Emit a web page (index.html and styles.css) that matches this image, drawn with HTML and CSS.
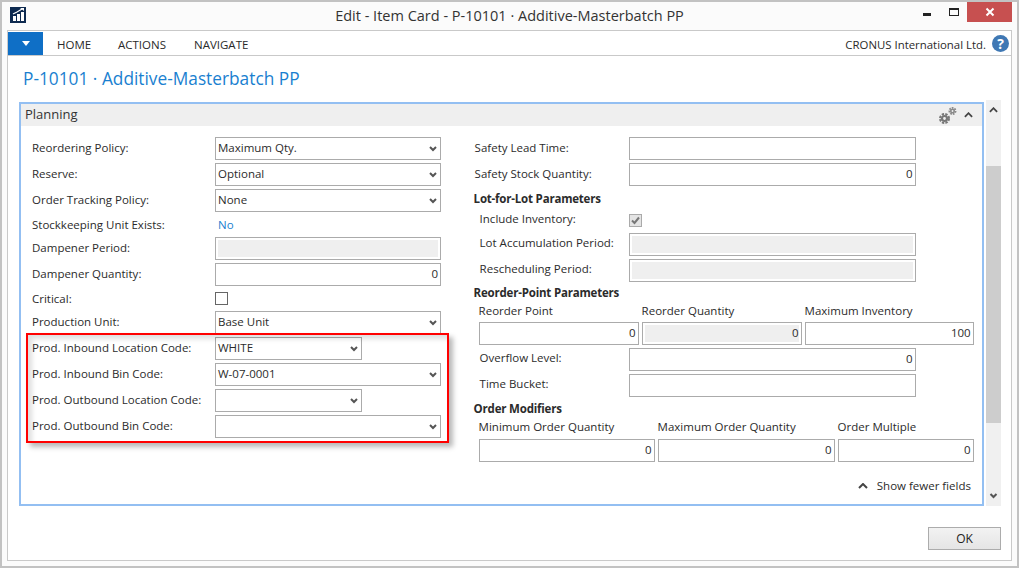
FILE: index.html
```html
<!DOCTYPE html>
<html lang="en">
<head>
<meta charset="utf-8">
<title>Edit - Item Card - P-10101 · Additive-Masterbatch PP</title>
<link rel="stylesheet" href="styles.css">
</head>
<body>
<svg class="defs" aria-hidden="true">
  <symbol id="down" viewBox="0 0 8 6"><path d="M1 1l3 3 3-3" fill="none" stroke="#555" stroke-width="2"/></symbol>
  <symbol id="up" viewBox="0 0 10 6"><path d="M1 5l4-4 4 4" fill="none" stroke="#444" stroke-width="2"/></symbol>
</svg>
<div class="window">
  <header class="titlebar">
    <svg class="logo" viewBox="0 0 16 16"><rect width="16" height="16" fill="#0e2a50"/><path d="M3 9h3v5H3zM7 7h3v7H7zM11 5h3v9h-3z" fill="#fff"/><path d="M3 7l4-2 5-3" fill="none" stroke="#fff" stroke-width="1.2"/><path d="M10 1h4v3z" fill="#fff"/></svg>
    <h1 class="wintitle">Edit - Item Card - P-10101 · Additive-Masterbatch PP</h1>
    <div class="winbtns">
      <span class="btn-min"></span>
      <span class="btn-max"></span>
      <span class="btn-close"><svg width="10" height="10" viewBox="0 0 10 10"><path d="M1.500 1.500l7 7M8.500 1.500l-7 7" stroke="#fff" stroke-width="2"/></svg></span>
    </div>
  </header>
  <div class="frame">
    <nav class="ribbon">
      <span class="appbtn"><i class="tri"></i></span>
      <span class="tab tab-home">HOME</span>
      <span class="tab tab-actions">ACTIONS</span>
      <span class="tab tab-nav">NAVIGATE</span>
      <span class="company">CRONUS International Ltd.</span>
      <span class="help">?</span>
    </nav>
    <main class="page">
      <h2 class="pagetitle">P-10101 · Additive-Masterbatch PP</h2>
      <div class="cardrow">
        <section class="card">
          <div class="cardhead">
            <span class="cardname">Planning</span>
            <svg class="gears" viewBox="0 0 18 17"><circle cx="5.500" cy="11.500" r="2.500" fill="none" stroke="#777" stroke-width="2.200"/><circle cx="5.500" cy="11.500" r="4.400" fill="none" stroke="#777" stroke-width="2.200" stroke-dasharray="2.300 1.200"/><circle cx="13.500" cy="4" r="1.700" fill="none" stroke="#8a8a8a" stroke-width="1.600"/><circle cx="13.500" cy="4" r="3.100" fill="none" stroke="#8a8a8a" stroke-width="1.800" stroke-dasharray="1.700 1"/></svg>
            <svg class="collapse"><use href="#up"/></svg>
          </div>
          <div class="cardbody">
            <div class="col col-left">
              <div class="row"><label class="lbl">Reordering Policy:</label><div class="fld sel">Maximum Qty.<svg class="chev"><use href="#down"/></svg></div></div>
              <div class="row"><label class="lbl">Reserve:</label><div class="fld sel">Optional<svg class="chev"><use href="#down"/></svg></div></div>
              <div class="row"><label class="lbl">Order Tracking Policy:</label><div class="fld sel">None<svg class="chev"><use href="#down"/></svg></div></div>
              <div class="row row-text"><label class="lbl">Stockkeeping Unit Exists:</label><a class="link">No</a></div>
              <div class="row"><label class="lbl">Dampener Period:</label><div class="fld off"></div></div>
              <div class="row"><label class="lbl">Dampener Quantity:</label><div class="fld num">0</div></div>
              <div class="row row-text"><label class="lbl">Critical:</label><span class="check"></span></div>
              <div class="row"><label class="lbl">Production Unit:</label><div class="fld sel">Base Unit<svg class="chev"><use href="#down"/></svg></div></div>
              <div class="row"><label class="lbl">Prod. Inbound Location Code:</label><div class="fld sel short">WHITE<svg class="chev"><use href="#down"/></svg></div></div>
              <div class="row"><label class="lbl">Prod. Inbound Bin Code:</label><div class="fld sel">W-07-0001<svg class="chev"><use href="#down"/></svg></div></div>
              <div class="row"><label class="lbl">Prod. Outbound Location Code:</label><div class="fld sel short"><svg class="chev"><use href="#down"/></svg></div></div>
              <div class="row"><label class="lbl">Prod. Outbound Bin Code:</label><div class="fld sel"><svg class="chev"><use href="#down"/></svg></div></div>
              <div class="highlight"></div>
            </div>
            <div class="col col-right">
              <div class="row"><label class="lbl">Safety Lead Time:</label><div class="fld"></div></div>
              <div class="row"><label class="lbl">Safety Stock Quantity:</label><div class="fld num">0</div></div>
              <h3 class="group group-first">Lot-for-Lot Parameters</h3>
              <div class="row row-text sub"><label class="lbl">Include Inventory:</label><span class="check checked"><svg width="11" height="11" viewBox="0 0 11 11"><path d="M2 5.500l2.500 2.500L9 2.500" fill="none" stroke="#777" stroke-width="2"/></svg></span></div>
              <div class="row sub"><label class="lbl">Lot Accumulation Period:</label><div class="fld off"></div></div>
              <div class="row sub"><label class="lbl">Rescheduling Period:</label><div class="fld off"></div></div>
              <h3 class="group">Reorder-Point Parameters</h3>
              <div class="triple triple-a">
                <span class="caption">Reorder Point</span><span class="caption">Reorder Quantity</span><span class="caption">Maximum Inventory</span>
                <div class="fld num">0</div><div class="fld num off-num">0</div><div class="fld num">100</div>
              </div>
              <div class="row sub"><label class="lbl">Overflow Level:</label><div class="fld num">0</div></div>
              <div class="row sub"><label class="lbl">Time Bucket:</label><div class="fld"></div></div>
              <h3 class="group group-order">Order Modifiers</h3>
              <div class="triple triple-b">
                <span class="caption">Minimum Order Quantity</span><span class="caption">Maximum Order Quantity</span><span class="caption">Order Multiple</span>
                <div class="fld num">0</div><div class="fld num">0</div><div class="fld num">0</div>
              </div>
            </div>
          </div>
          <div class="more"><svg class="morechev"><use href="#up"/></svg><span>Show fewer fields</span></div>
        </section>
        <aside class="scrollbar">
          <svg class="sb-arrow"><use href="#up"/></svg>
          <div class="sb-track"><div class="sb-thumb"></div></div>
          <svg class="sb-arrow"><use href="#down"/></svg>
        </aside>
      </div>
      <footer class="actions"><button class="ok" type="button">OK</button></footer>
    </main>
  </div>
</div>
</body>
</html>
```
FILE: styles.css
```css
* { box-sizing: border-box; }
html, body { margin: 0; padding: 0; }
body { width: 1019px; height: 568px; overflow: hidden; font-family: "Open Sans", "Noto Sans", sans-serif; font-size: 11.5px; color: #2b2b2b; }
.defs { position: absolute; width: 0; height: 0; }
.window { width: 1019px; height: 568px; border: 2px solid #c2c2c2; background: #fbfbfb; display: flex; flex-direction: column; }

.titlebar { height: 28px; flex: none; display: flex; align-items: flex-start; position: relative; }
.logo { width: 16px; height: 16px; margin: 5px 0 0 8px; flex: none; }
.wintitle { position: absolute; left: 0; right: 0; top: 5px; margin: 0; text-align: center; font-size: 14.5px; line-height: 18px; font-weight: 400; color: #333; }
.winbtns { margin-left: auto; display: flex; align-items: flex-start; position: relative; }
.btn-min { width: 8px; height: 3px; background: #222; margin: 11px 18px 0 0; }
.btn-max { width: 10px; height: 8px; border: 1px solid #222; border-top-width: 2px; margin: 6px 8px 0 0; }
.btn-close { width: 45px; height: 20px; background: #c75050; margin: 0 5px 0 0; display: flex; align-items: center; justify-content: center; }

.frame { flex: 1; margin: 0 5px 5px; border: 1px solid #c9c9c9; background: #fff; display: flex; flex-direction: column; min-height: 0; }
.ribbon { height: 25px; flex: none; border-bottom: 1px solid #c9c9c9; display: flex; align-items: center; background: #fff; padding-top: 1px; }
.appbtn { width: 35px; height: 23px; background: #0f6fc6; display: flex; align-items: center; justify-content: center; flex: none; }
.tri { width: 0; height: 0; border-left: 4.500px solid transparent; border-right: 4.500px solid transparent; border-top: 5px solid #fff; }
.tab { font-size: 11.5px; color: #2a2a2a; padding-top: 2px; }
.tab-home { margin-left: 14px; width: 61px; }
.tab-actions { width: 76px; }
.company { margin-left: auto; font-size: 11.4px; color: #2a2a2a; padding-top: 2px; }
.help { width: 17px; height: 17px; border-radius: 50%; background: #3f78b4; color: #fff; font-weight: 700; font-size: 14px; line-height: 17px; text-align: center; margin: 0 2px 0 6px; }

.page { flex: 1; display: flex; flex-direction: column; padding-left: 11px; min-height: 0; }
.pagetitle { height: 44px; margin: 0; flex: none; font-size: 17.3px; line-height: 46px; font-weight: 400; color: #1a7fd0; padding-left: 4px; }
.cardrow { display: flex; height: 406px; flex: none; }
.card { width: 965px; height: 404px; margin-top: 2px; border: 2px solid #93bff2; display: flex; flex-direction: column; }
.cardhead { height: 22px; flex: none; background: #efefef; display: flex; align-items: center; padding: 0 8px 0 4px; }
.cardname { font-size: 13px; color: #333; padding-bottom: 2px; }
.gears { width: 18px; height: 17px; margin-left: auto; }
.collapse { width: 9px; height: 6px; margin-left: 7px; margin-right: 1px; }

.cardbody { display: flex; padding-top: 11px; position: relative; flex: none; }
.col { display: flex; flex-direction: column; }
.col-left { width: 455px; padding-left: 11px; position: relative; }
.col-right { width: 509px; }
.row { display: flex; align-items: center; height: 23px; margin-bottom: 3px; }
.row-text { height: 19px; }
.lbl { flex: none; width: 183px; white-space: nowrap; padding-bottom: 2px; }
.row-text .lbl { padding-bottom: 0; }
.col-right .lbl { width: 154px; }
.col-right .fld { width: 287px; }
.sub { padding-left: 5px; }
.col-right .sub .lbl { width: 149px; padding-bottom: 4px; }

.fld { width: 226px; height: 23px; border: 1px solid #ababab; background: #fff; padding: 0 2px; line-height: 20px; position: relative; white-space: nowrap; color: #2b2b2b; }
.short { width: 147px; }
.num { text-align: right; }
.off { background: #efefef; background-clip: content-box; padding: 2px; }
.off-num { background: linear-gradient(#efefef, #efefef) content-box; padding: 2px; line-height: 16px; }
.chev { position: absolute; right: 3px; top: 8px; width: 8px; height: 6px; }
.link { color: #1a7fd0; padding-left: 3px; }
.check { width: 13px; height: 13px; border: 1px solid #666; background: #fff; display: block; position: relative; }
.checked { background: #e4e4e4; border-color: #aaa; }
.checked svg { position: absolute; left: 0; top: 0; }

.group { margin: 0; height: 17px; font-size: 11.5px; line-height: 15px; font-weight: 700; color: #2b2b2b; letter-spacing: -0.2px; margin-left: -1px; }
.group-first { height: 22px; line-height: 20px; }
.group-order { height: 18px; line-height: 18px; }
.triple { display: grid; column-gap: 3px; margin-bottom: 3px; padding-left: 4px; grid-template-rows: 20px 23px; }
.triple .fld { width: auto; }
.triple-a { grid-template-columns: 160px 160px 169px; }
.triple-b { grid-template-columns: 176px 177px 136px; grid-template-rows: 21px 23px; }
.caption { white-space: nowrap; line-height: 17px; }

.highlight { position: absolute; left: 5px; top: 196px; width: 423px; height: 110px; border: 2px solid #ff0000; box-shadow: 4px 4px 5px rgba(0,0,0,.28), inset 4px 4px 5px rgba(0,0,0,.13); pointer-events: none; }

.more { margin-top: auto; height: 26px; flex: none; display: flex; align-items: flex-start; justify-content: flex-end; padding-right: 11px; }
.more span { line-height: 16px; }
.morechev { width: 10px; height: 6px; margin: 5px 9px 0 0; }

.scrollbar { width: 15px; margin-left: 2px; background: #f0f0f0; display: flex; flex-direction: column; }
.sb-arrow { width: 9px; height: 6px; margin: 7px 3px; flex: none; }
.sb-track { flex: 1; padding-top: 46px; padding-bottom: 63px; }
.sb-thumb { height: 100%; background: #cdcdcd; }

.actions { display: flex; justify-content: flex-end; padding: 21px 10px 0 0; }
.ok { width: 73px; height: 23px; border: 1px solid #acacac; background: linear-gradient(#f2f2f2, #e5e5e5); font: inherit; font-size: 12px; color: #222; padding: 0; }
```
